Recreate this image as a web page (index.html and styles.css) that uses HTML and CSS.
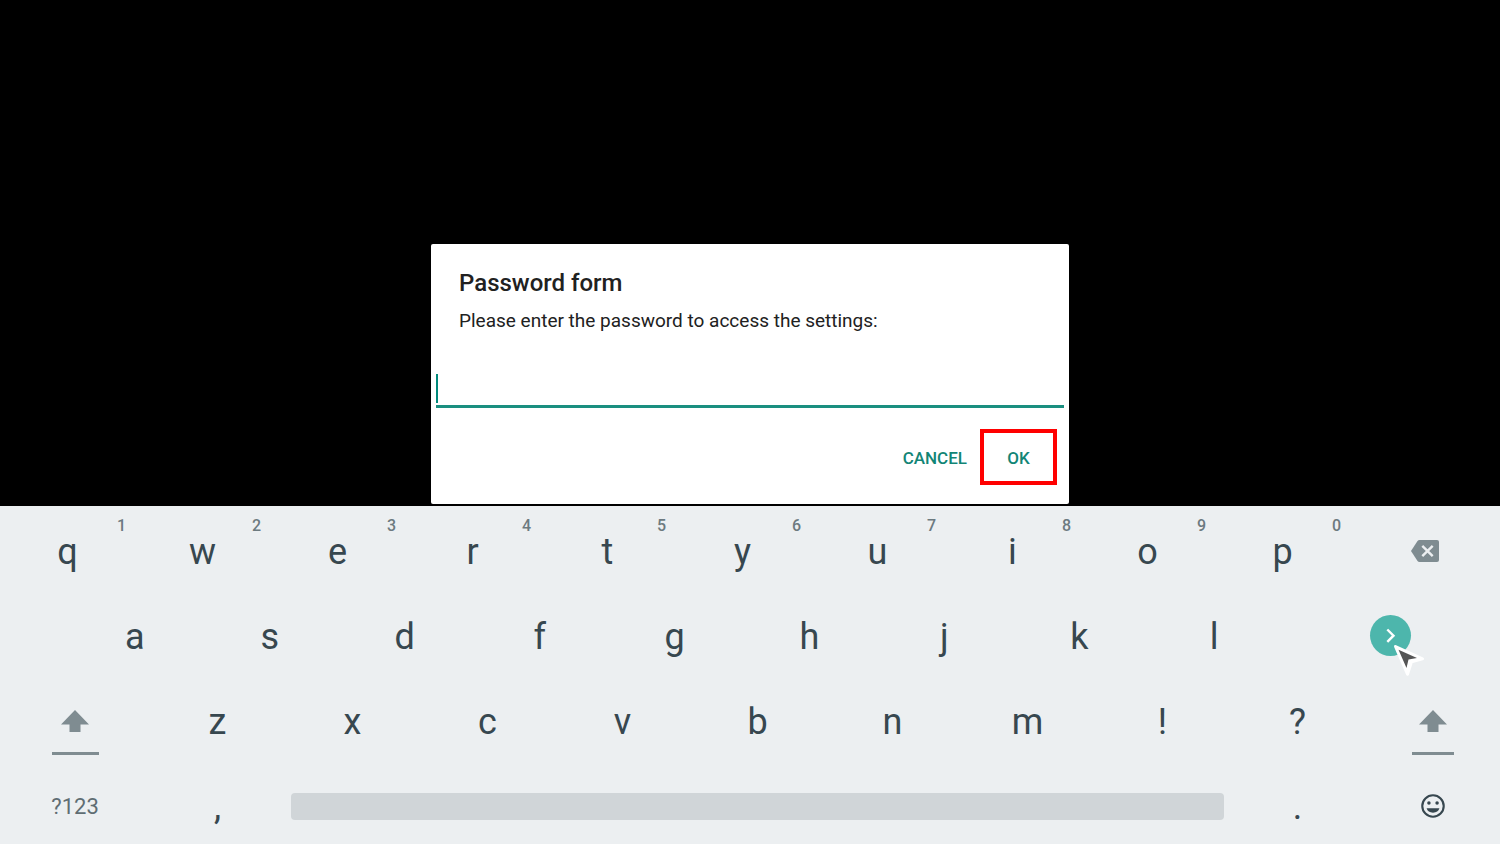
FILE: index.html
```html
<!DOCTYPE html>
<html lang="en">
<head>
<meta charset="utf-8">
<meta name="viewport" content="width=device-width, initial-scale=1">
<title>Password form</title>
<link rel="stylesheet" href="styles.css">
</head>
<body>
<main class="stage">
  <form class="dialog" role="dialog" aria-labelledby="dialog-title">
    <div class="dialog-head">
      <h1 class="dialog-title" id="dialog-title">Password form</h1>
      <label class="dialog-message" for="password">Please enter the password to access the settings:</label>
    </div>
    <div class="field">
      <input class="field-input" id="password" type="password">
      <span class="caret"></span>
    </div>
    <div class="actions">
      <button class="action" type="button">CANCEL</button>
      <button class="action action-highlight" type="button">OK</button>
    </div>
  </form>
</main>
<section class="keyboard" aria-label="Keyboard">
  <div class="row row-top">
    <button class="key">q<span class="hint">1</span></button>
    <button class="key">w<span class="hint">2</span></button>
    <button class="key">e<span class="hint">3</span></button>
    <button class="key">r<span class="hint">4</span></button>
    <button class="key">t<span class="hint">5</span></button>
    <button class="key">y<span class="hint">6</span></button>
    <button class="key">u<span class="hint">7</span></button>
    <button class="key">i<span class="hint">8</span></button>
    <button class="key">o<span class="hint">9</span></button>
    <button class="key">p<span class="hint">0</span></button>
    <button class="key key-icon" aria-label="Backspace">
      <svg class="icon-backspace" viewBox="0 0 28 22"><path fill="#7f8c91" d="M8.500 0H26a2 2 0 0 1 2 2V20a2 2 0 0 1-2 2H8.500Q7.300 22 6.500 21L0 11 6.500 1Q7.300 0 8.500 0Z"/><path fill="none" stroke="#eceff1" stroke-width="2.400" d="M11.300 5.800 21.700 16.200M21.700 5.800 11.300 16.200"/></svg>
    </button>
  </div>
  <div class="row row-home">
    <span></span>
    <button class="key">a</button>
    <button class="key">s</button>
    <button class="key">d</button>
    <button class="key">f</button>
    <button class="key">g</button>
    <button class="key">h</button>
    <button class="key">j</button>
    <button class="key">k</button>
    <button class="key">l</button>
    <button class="key key-icon" aria-label="Next">
      <span class="next">
        <svg class="icon-next" viewBox="0 0 41 41"><path fill="none" stroke="#fff" stroke-width="2.400" d="M17.300 14.500 23.500 20.700 17.300 26.900"/></svg>
        <svg class="pointer" viewBox="0 0 32 34"><path fill="#fff" stroke="#fff" stroke-width="3" stroke-linejoin="round" d="M2.500 2.500 29.500 14.800 18.500 17.800 14.500 30.200Z"/><path fill="#555" d="M5.500 5.800 24 14 15.500 15.500 13.500 24Z"/></svg>
      </span>
    </button>
  </div>
  <div class="row row-low">
    <button class="key key-icon" aria-label="Shift"><span class="shift shift-wide"><svg class="icon-shift" viewBox="0 0 28 22"><path fill="#7f8c91" d="M14 0 28 14.500H19.500V22H8.500V14.500H0Z"/></svg></span></button>
    <button class="key">z</button>
    <button class="key">x</button>
    <button class="key">c</button>
    <button class="key">v</button>
    <button class="key">b</button>
    <button class="key">n</button>
    <button class="key">m</button>
    <button class="key">!</button>
    <button class="key">?</button>
    <button class="key key-icon" aria-label="Shift"><span class="shift"><svg class="icon-shift" viewBox="0 0 28 22"><path fill="#7f8c91" d="M14 0 28 14.500H19.500V22H8.500V14.500H0Z"/></svg></span></button>
  </div>
  <div class="row row-bottom">
    <button class="key key-symbols">?123</button>
    <button class="key">,</button>
    <button class="key key-icon" aria-label="Space"><span class="space"></span></button>
    <button class="key">.</button>
    <button class="key key-icon" aria-label="Emoji">
      <svg class="icon-emoji" viewBox="0 0 24 24"><circle cx="12" cy="12" r="9.200" fill="none" stroke="#37474f" stroke-width="1.800"/><circle cx="8.500" cy="9.500" r="1.500" fill="#37474f"/><circle cx="15.500" cy="9.500" r="1.500" fill="#37474f"/><path fill="#37474f" d="M6.500 14H17.500A5.700 5 0 0 1 6.500 14Z"/></svg>
    </button>
  </div>
</section>
</body>
</html>
```
FILE: styles.css
```css
* {
  box-sizing: border-box;
}

body {
  margin: 0;
  min-height: 100vh;
  display: flex;
  flex-direction: column;
  background: #000;
  color: #212121;
  font-family: Roboto, "Liberation Sans", sans-serif;
}

button {
  font-family: inherit;
  background: none;
  border: 0;
  padding: 0;
}

.stage {
  flex: 1;
  display: flex;
  justify-content: center;
  align-items: flex-end;
  padding-bottom: 2px;
}

.dialog {
  width: 100%;
  max-width: 638px;
  padding: 25px 5px 19px;
  background: #fff;
  border-radius: 2px;
}

.dialog-head {
  display: flex;
  flex-direction: column;
  gap: 12px;
  padding: 0 23px;
}

.dialog-title {
  margin: 0;
  font-size: 24px;
  line-height: 28px;
  font-weight: 500;
}

.dialog-message {
  font-size: 19px;
  line-height: 24px;
}

.field {
  position: relative;
  margin-top: 37px;
}

.field-input {
  display: block;
  width: 100%;
  height: 38px;
  padding: 0;
  border: 0;
  border-bottom: 3px solid #1a8f80;
  border-radius: 0;
  outline: 0;
  font-size: 19px;
}

.caret {
  position: absolute;
  left: 0;
  top: 4px;
  width: 2px;
  height: 29px;
  background: #00897b;
}

.actions {
  display: flex;
  justify-content: flex-end;
  gap: 13px;
  margin-top: 21px;
  padding-right: 7px;
}

.action {
  height: 56px;
  padding-top: 2px;
  font-size: 17px;
  font-weight: 500;
  color: #128576;
}

.action-highlight {
  width: 77px;
  border: 4px solid #f00;
}

.keyboard {
  padding-top: 4px;
  background: #eceff1;
}

.row {
  display: grid;
  height: 85px;
}

.row-top {
  grid-template-columns: repeat(10, 9fr) 10fr;
}

.row-home {
  grid-template-columns: 9fr repeat(9, 18fr) 29fr;
  padding-right: 1px;
}

.row-low {
  grid-template-columns: 10fr repeat(10, 9fr);
}

.row-bottom {
  height: 79px;
  grid-template-columns: 10fr 9fr 63fr 9fr 9fr;
}

.key {
  position: relative;
  display: flex;
  justify-content: center;
  align-items: flex-start;
  min-width: 0;
  padding-top: 21px;
  font-size: 36px;
  line-height: 42px;
  color: #37474f;
}

.key-icon {
  padding-top: 20px;
}

.key-symbols {
  font-size: 22px;
  color: #5f6d73;
}

.hint {
  position: absolute;
  top: 6px;
  right: 9px;
  font-size: 16px;
  line-height: 20px;
  font-weight: 500;
  color: #6c7a80;
}

.icon-backspace {
  width: 28px;
  height: 22px;
  margin-top: 10px;
}

.next {
  position: relative;
  display: block;
  width: 41px;
  height: 41px;
  border-radius: 50%;
  background: #4db6ac;
}

.icon-next {
  display: block;
  width: 41px;
  height: 41px;
}

.pointer {
  position: absolute;
  left: 23px;
  top: 29px;
  width: 32px;
  height: 34px;
}

.shift {
  display: flex;
  justify-content: center;
  width: 42px;
  height: 55px;
  padding-top: 10px;
  border-bottom: 3px solid #7f8c91;
}

.shift-wide {
  width: 47px;
}

.icon-shift {
  width: 28px;
  height: 22px;
}

.space {
  width: 100%;
  height: 27px;
  margin: 8px 6px 0;
  border-radius: 4px;
  background: #d0d5d8;
}

.icon-emoji {
  width: 28px;
  height: 28px;
  margin-top: 7px;
}
```
